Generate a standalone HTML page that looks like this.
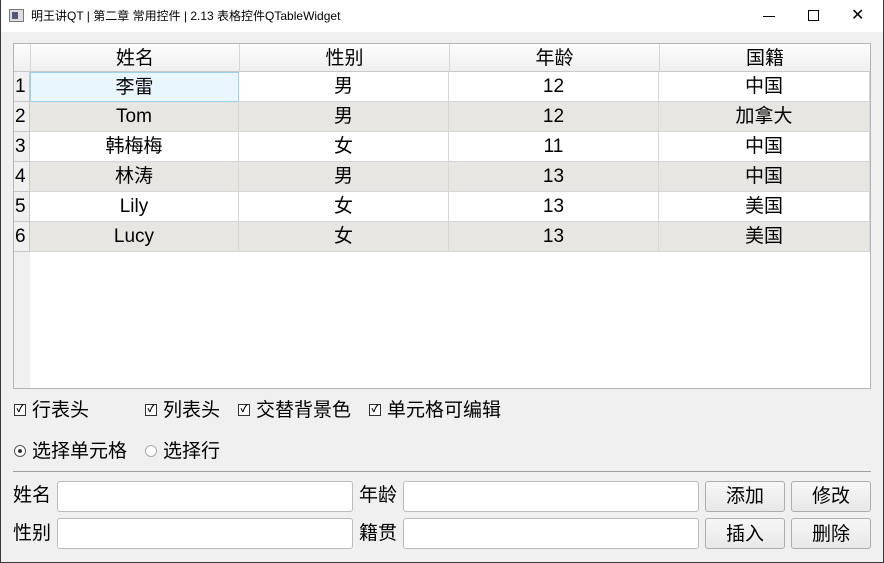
<!DOCTYPE html>
<html><head><meta charset="utf-8"><style>
*{margin:0;padding:0;box-sizing:border-box}
body{width:884px;height:563px;background:#f0f0f0;font-family:"Liberation Sans","Noto Sans CJK SC",sans-serif;position:relative;overflow:hidden;color:#000}
.frame{position:absolute;left:0;top:0;width:884px;height:563px;border:1px solid #3a3a3a;border-top:none}
.tb{position:absolute;left:0;top:0;width:884px;height:32px;background:#fff}
.ab{position:absolute}
.c{position:absolute;text-align:center;font-size:19px;line-height:29px}
.lbl{position:absolute;font-size:19px;line-height:20px;white-space:nowrap}
.inp{position:absolute;background:#fff;border:1px solid #bcbcbc;border-radius:3px;height:31px}
.btn{position:absolute;background:linear-gradient(#f7f7f7,#e8e8e8);border:1px solid #adadad;border-radius:3px;height:31px;width:80px;font-size:19px;text-align:center;line-height:29px}
.cb{position:absolute;width:12px;height:12px;border:1px solid #333;background:#fff;font-size:10px;line-height:10px;text-align:center;font-weight:bold}
</style></head><body>
<div class="tb"></div>
<div class="ab" style="left:9px;top:9px;width:15px;height:13px;border:1px solid #777;background:#ddd"><div style="position:absolute;left:2px;top:2px;width:6px;height:7px;background:#557"></div></div>
<div class="ab" style="left:31px;top:8px;font-size:12px;line-height:16px;white-space:nowrap">明王讲QT | 第二章 常用控件 | 2.13 表格控件QTableWidget</div>
<div class="ab" style="left:763px;top:16px;width:12px;height:1px;background:#000"></div>
<div class="ab" style="left:808px;top:10px;width:11px;height:11px;border:1px solid #000"></div>
<div class="ab" style="left:851px;top:8px;font-size:16px;line-height:16px">✕</div>

<div class="ab" style="left:13px;top:43px;width:858px;height:346px;border:1px solid #b5b5b5;background:#fff"></div>
<div class="ab" style="left:14px;top:44px;width:16px;height:344px;background:#f0f0f0"></div>
<div class="ab" style="left:14px;top:44px;width:856px;height:28px;background:linear-gradient(#fdfdfd,#efefef);border-bottom:1px solid #c8c8c8"></div>
<div class="c" style="left:30px;top:44px;width:209px;border-left:1px solid #d6d6d6">姓名</div>
<div class="c" style="left:239px;top:44px;width:210px;border-left:1px solid #d6d6d6">性别</div>
<div class="c" style="left:449px;top:44px;width:210px;border-left:1px solid #d6d6d6">年龄</div>
<div class="c" style="left:659px;top:44px;width:211px;border-left:1px solid #d6d6d6">国籍</div>
<div id="rows"></div>
<script>
var d=[["李雷","男","12","中国"],["Tom","男","12","加拿大"],["韩梅梅","女","11","中国"],["林涛","男","13","中国"],["Lily","女","13","美国"],["Lucy","女","13","美国"]];
var x=[30,239,449,659,870],h="";
for(var i=0;i<6;i++){var y=72+i*30;var bg=i%2?"#e8e6e2":"#fff";
h+='<div class="ab" style="left:30px;top:'+y+'px;width:840px;height:30px;background:'+bg+';border-bottom:1px solid #d6d6d6"></div>';
h+='<div class="c" style="left:14px;top:'+y+'px;width:16px;height:30px;line-height:30px;border-bottom:1px solid #c8c8c8;border-right:1px solid #c8c8c8;background:#f0f0f0;text-align:left;padding-left:1px">'+(i+1)+'</div>';
for(var j=0;j<4;j++){var st=(i==0&&j==0)?"background:#eaf6fd;border:1px solid #99d1ef;":"border-right:1px solid #d6d6d6;";
h+='<div class="c" style="left:'+x[j]+'px;top:'+y+'px;width:'+(x[j+1]-x[j])+'px;height:30px;line-height:30px;'+st+'">'+d[i][j]+'</div>';}}
document.getElementById("rows").innerHTML=h;
</script>

<div class="cb" style="left:14px;top:404px">✓</div><div class="lbl" style="left:32px;top:401px">行表头</div>
<div class="cb" style="left:145px;top:404px">✓</div><div class="lbl" style="left:163px;top:401px">列表头</div>
<div class="cb" style="left:238px;top:404px">✓</div><div class="lbl" style="left:256px;top:401px">交替背景色</div>
<div class="cb" style="left:369px;top:404px">✓</div><div class="lbl" style="left:387px;top:401px">单元格可编辑</div>
<div class="ab" style="left:14px;top:445px;width:12px;height:12px;border:1px solid #555;border-radius:50%;background:#fff"><div style="position:absolute;left:3px;top:3px;width:4px;height:4px;border-radius:50%;background:#333"></div></div>
<div class="lbl" style="left:32px;top:442px">选择单元格</div>
<div class="ab" style="left:145px;top:445px;width:12px;height:12px;border:1px solid #aaa;border-radius:50%;background:#fff"></div>
<div class="lbl" style="left:163px;top:442px">选择行</div>
<div class="ab" style="left:13px;top:471px;width:858px;height:1px;background:#a0a0a0"></div>

<div class="lbl" style="left:13px;top:486px">姓名</div>
<div class="inp" style="left:57px;top:481px;width:296px"></div>
<div class="lbl" style="left:359px;top:486px">年龄</div>
<div class="inp" style="left:403px;top:481px;width:296px"></div>
<div class="btn" style="left:705px;top:481px">添加</div>
<div class="btn" style="left:791px;top:481px">修改</div>
<div class="lbl" style="left:13px;top:524px">性别</div>
<div class="inp" style="left:57px;top:518px;width:296px"></div>
<div class="lbl" style="left:359px;top:524px">籍贯</div>
<div class="inp" style="left:403px;top:518px;width:296px"></div>
<div class="btn" style="left:705px;top:518px;line-height:31px">插入</div>
<div class="btn" style="left:791px;top:518px;line-height:31px">删除</div>
<div class="frame"></div>
</body></html>
